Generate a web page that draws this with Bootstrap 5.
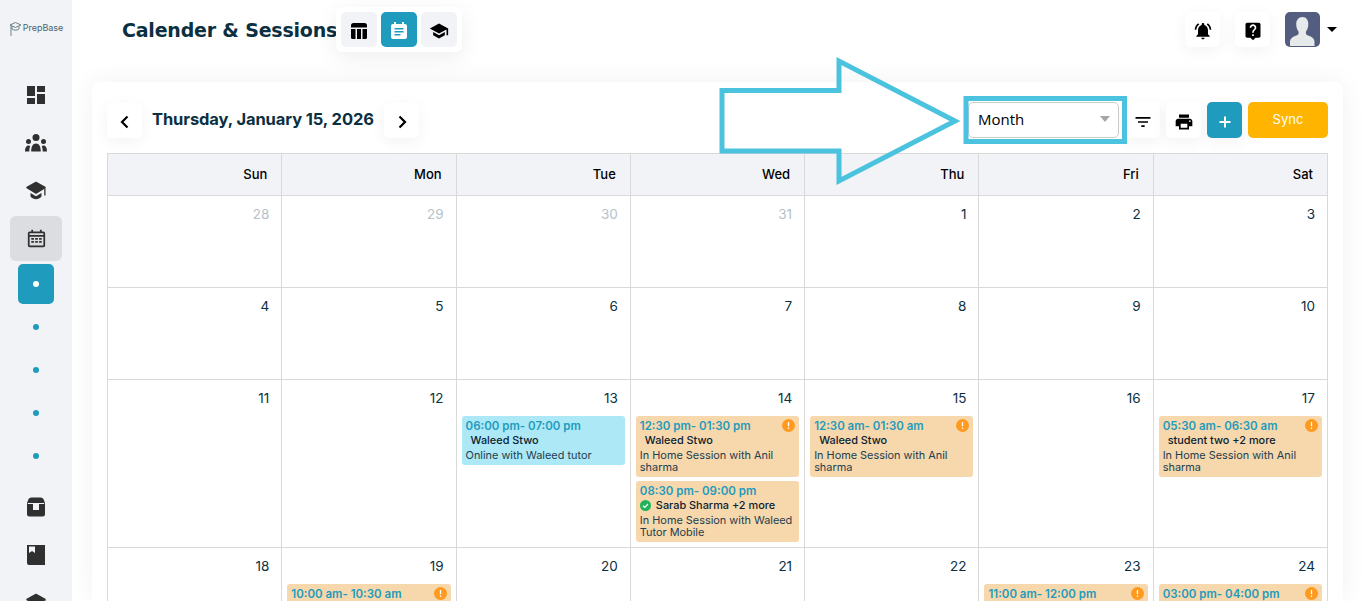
<!DOCTYPE html>
<html lang="en">
<head>
  <meta charset="UTF-8">
  <title>Calender &amp; Sessions</title>
  <link href="https://cdn.jsdelivr.net/npm/bootstrap@5.3.3/dist/css/bootstrap.min.css" rel="stylesheet">
  <style>
    html, body { height: 100%; overflow: hidden; }
    body { font-family: "Inter", "Liberation Sans", sans-serif; color: #0b3041; background: #fff; position: relative; }

    .side-rail { width: 72px; height: 601px; flex: none; background: #f1f3f6; overflow: hidden; }
    .side-rail > * { flex: none; }
    .rail-logo { height: 71px; padding-top: 21px; gap: 1px; color: #4a6472; font-size: 9px; }
    .rail-item { height: 48px; color: #303030; }
    .rail-item svg { width: 24px; height: 24px; fill: currentColor; }
    .rail-open { width: 52px; height: 45px; margin: 1px 0 3px; background: #dcdde0; border-radius: 6px; }
    .rail-sub { width: 36px; height: 43px; color: #1e9bbd; font-size: 0; }
    .rail-sub i { width: 6px; height: 6px; background: currentColor; border-radius: 50%; display: block; }
    .rail-sub.now { height: 40px; margin-bottom: 1px; background: #1e9bbd; color: #fff; border-radius: 5px; }
    .rail-gap { margin-top: 6px; }

    .page-main { min-width: 0; height: 601px; overflow: hidden; }
    .top-bar { height: 82px; padding: 12px 25px 0 50px; }
    .page-title { font-family: "DejaVu Sans", sans-serif; font-weight: 700; font-size: 19px; letter-spacing: -.2px; line-height: 36px; color: #0b3041; margin: 0 20px 0 0; width: 194px; white-space: nowrap; }
    .tab-tray { padding: 5px; margin-top: -5px; gap: 4px; background: #fff; border-radius: 6px; box-shadow: 0 6px 22px rgba(0, 0, 0, .07); }
    .sq-btn { width: 35px; height: 35px; padding: 0; border: 0; border-radius: 5px; background: #fff; color: #000; flex: none; box-shadow: 0 4px 16px rgba(0, 0, 0, .05); }
    .sq-btn svg { width: 20px; height: 20px; fill: currentColor; }
    .tab-tray .sq-btn { width: 36px; background: #f1f3f6; box-shadow: none; }
    .tab-tray .sq-btn.on, .sq-btn.on { background: #1e9bbd; color: #fff; }
    .top-right { gap: 15px; }
    .user-pic { width: 35px; height: 35px; border-radius: 5px; background: #535d80; overflow: hidden; }
    .user-caret { width: 0; height: 0; margin-left: 7px; border-left: 5.5px solid transparent; border-right: 5.5px solid transparent; border-top: 5.5px solid #000; }

    .cal-panel { margin: 0 19px 0 20px; padding: 20px 15px 0; height: 519px; overflow: hidden; background: #fff; border-radius: 8px 8px 0 0; box-shadow: 0 0 26px rgba(0, 0, 0, .06); }
    .cal-head { height: 51px; }
    .cal-nav { margin-top: 1px; }
    .cal-date { font-size: 16.5px; font-weight: 700; line-height: 35px; margin: 0 10px; width: 222px; white-space: nowrap; color: #0b3041; letter-spacing: -.1px; }
    .view-pick { width: 151px; height: 36px; padding: 0 8px 2px 9px; font-family: "Open Sans", sans-serif; font-size: 15px; font-weight: 500; color: #000; background: #fff; border: 1px solid #ccc; border-radius: 5px; }
    .view-pick i { width: 0; height: 0; border-left: 5.5px solid transparent; border-right: 5.5px solid transparent; border-top: 6px solid #a6a6a6; }
    .act-row { gap: 6px; }
    .act-row .sq-btn { height: 36px; }
    .act-row .view-pick { margin-right: -1px; transform: translateX(-1px); }
    .sync-btn { width: 80px; height: 36px; padding: 0; font-size: 13px; color: #fff; background: #ffb400; border: 0; border-radius: 5px; }

    .cal-grid { width: 1221px; table-layout: fixed; border-collapse: collapse; margin: 0; }
    .cal-grid th, .cal-grid td { border: 1px solid #d9d9d9; text-align: right; vertical-align: top; padding: 0; }
    .cal-grid th { height: 42px; vertical-align: middle; padding-right: 14px; background: #f1f3f6; font-size: 13px; font-weight: 500; color: #000; }
    .cal-grid td { padding: 9px 5px 0; }
    .wk-92 { height: 92px; }
    .wk-168 { height: 168px; }
    .day-no { display: block; padding-right: 7px; height: 27px; font-size: 13.500px; line-height: 18px; color: #0b3041; }
    .day-off { color: #b7c2c9; }

    .sess { position: relative; margin-bottom: 4px; padding: 3px 4px 4px; text-align: left; border-radius: 3px; background: #f7d7ac; font-size: 10.9px; line-height: 12px; color: #22404f; }
    .sess.live { background: #ade8f7; }
    .sess-time { font-size: 11.5px; font-weight: 600; line-height: 15px; color: #1e9bbd; white-space: nowrap; }
    .sess-who { padding-left: 5px; margin: -1px 0 2px; font-weight: 500; line-height: 14px; color: #0b2230; white-space: nowrap; }
    .sess-who svg { width: 11px; height: 11px; margin: -2px 5px 0 -5px; }
    .sess-warn { position: absolute; top: 3px; right: 4px; width: 13px; height: 13px; }

    .mark-arrow { position: absolute; left: 0; top: 0; pointer-events: none; }
  </style>
</head>
<body>

<div class="d-flex">
  <aside class="side-rail d-flex flex-column align-items-center">
    <div class="rail-logo d-flex align-items-start justify-content-center">
      <svg width="13" height="15" viewBox="0 0 13 15" fill="none" stroke="#4a6472" stroke-width=".8"><path d="M1 4 6.5 1.5 12 4 6.5 6.5zM3 5.5V8c1 1.5 6 1.5 7 0V5.5M2 5v8M1 14h2"/></svg>
      <span>PrepBase</span>
    </div>
    <div class="rail-item d-flex align-items-center justify-content-center"><svg viewBox="0 0 24 24"><path d="M3 13h8V3H3v10zm0 8h8v-6H3v6zm10 0h8V11h-8v10zm0-18v6h8V3h-8z"/></svg></div>
    <div class="rail-item d-flex align-items-center justify-content-center"><svg viewBox="0 0 24 24"><circle cx="12" cy="6.500" r="3.500"/><circle cx="4.500" cy="10.500" r="2.500"/><circle cx="19.500" cy="10.500" r="2.500"/><path d="M7.200 20.500c0-5 1.500-8 4.800-8s4.800 3 4.800 8zM1 20.500c0-3.500 1.200-6 3.500-6 .6 0 1.200.2 1.700.5-.6 1.500-.9 3.300-.9 5.500zM23 20.500c0-3.500-1.200-6-3.500-6-.6 0-1.200.2-1.700.5.6 1.500.9 3.300.9 5.500z"/></svg></div>
    <div class="rail-item d-flex align-items-center justify-content-center"><svg viewBox="0 0 24 24"><path d="M12 3.500 21 8.500 12 14 3 8.500z" stroke="currentColor" stroke-width="1.500" stroke-linejoin="round"/><path d="M6.500 14 12 17.300l5.500-3.300v3.500c-3 3.500-8 3.500-11 0zM20.200 10v6.500h1.300V9z"/></svg></div>
    <div class="rail-open d-flex align-items-center justify-content-center">
      <svg width="19" height="19" viewBox="0 0 22 22" fill="#303030"><path d="M5 1h2v2h8V1h2v2h2a2 2 0 0 1 2 2v14a2 2 0 0 1-2 2H3a2 2 0 0 1-2-2V5a2 2 0 0 1 2-2h2zM3 5v2h16V5zm0 4v10h16V9z" fill-rule="evenodd"/><path d="M5 10.500h3v2H5zm4.500 0h3v2h-3zm4.500 0h3v2h-3zM5 14h3v2H5zm4.500 0h3v2h-3zm4.500 0h3v2h-3z"/></svg>
    </div>
    <div class="rail-sub now d-flex align-items-center justify-content-center"><i></i></div>
    <div class="rail-sub d-flex align-items-center justify-content-center"><i></i></div>
    <div class="rail-sub d-flex align-items-center justify-content-center"><i></i></div>
    <div class="rail-sub d-flex align-items-center justify-content-center"><i></i></div>
    <div class="rail-sub d-flex align-items-center justify-content-center"><i></i></div>
    <div class="rail-item rail-gap d-flex align-items-center justify-content-center"><svg viewBox="0 0 24 24"><path fill-rule="evenodd" d="M7.500 2.500h9c1.500 0 2.500.8 3.200 2L21 8v11a2.500 2.500 0 0 1-2.500 2.500h-13A2.500 2.500 0 0 1 3 19V8l1.300-3.500c.7-1.200 1.700-2 3.200-2zM3.800 8v1h5.200v6h6V9h5.200V8H15.200V8H8.800z"/></svg></div>
    <div class="rail-item d-flex align-items-center justify-content-center"><svg viewBox="0 0 24 24"><path fill-rule="evenodd" d="M3 2h18v20H5a2 2 0 0 1-2-2zM5 3.500v6.500l3-2 3 2V3.500z"/></svg></div>
    <div class="rail-item d-flex align-items-center justify-content-center"><svg viewBox="0 0 24 24"><path d="M12 3.500 21 8.500 12 14 3 8.500z" stroke="currentColor" stroke-width="1.500" stroke-linejoin="round"/><path d="M6.500 14 12 17.300l5.500-3.300v3.500c-3 3.500-8 3.500-11 0zM20.200 10v6.500h1.300V9z"/></svg></div>
  </aside>

  <main class="page-main flex-grow-1">
    <header class="top-bar d-flex align-items-start">
      <h1 class="page-title">Calender &amp; Sessions</h1>
      <div class="tab-tray d-flex">
        <button class="sq-btn" type="button"><svg viewBox="0 0 20 20"><path d="M2 4.500A2.500 2.500 0 0 1 4.500 2h11A2.500 2.500 0 0 1 18 4.500V6.500H2zM2 8h4.500v10h-3A1.500 1.500 0 0 1 2 16.500zm6 0h4v10H8zm5.500 0H18v8.500a1.500 1.500 0 0 1-1.500 1.500h-3z"/></svg></button>
        <button class="sq-btn on" type="button"><svg viewBox="0 0 20 20"><path fill-rule="evenodd" d="M5 1h2v2h6V1h2v2h1a2 2 0 0 1 2 2v11a2 2 0 0 1-2 2H4a2 2 0 0 1-2-2V5a2 2 0 0 1 2-2h1zM5.500 7v1.500h9V7zm0 3v1.500h9V10zm0 3v1.500h6V13z"/></svg></button>
        <button class="sq-btn" type="button"><svg viewBox="0 0 24 24"><path d="M5 13.180v4L12 21l7-3.820v-4L12 17l-7-3.820zM12 3 1 9l11 6 9-4.910V17h2V9L12 3z"/></svg></button>
      </div>
      <div class="top-right d-flex align-items-center ms-auto">
        <button class="sq-btn" type="button"><svg viewBox="0 0 24 24"><path d="M7.58 4.080 6.150 2.650C3.750 4.480 2.170 7.300 2.030 10.500h2c.15-2.650 1.510-4.970 3.550-6.420zm12.390 6.420h2c-.15-3.200-1.730-6.020-4.120-7.850l-1.420 1.430c2.020 1.450 3.390 3.770 3.540 6.420zM18 11c0-3.070-1.640-5.640-4.500-6.320V4c0-.83-.67-1.500-1.500-1.500s-1.500.67-1.500 1.500v.68C7.630 5.360 6 7.920 6 11v5l-2 2v1h16v-1l-2-2v-5zm-6 11c.14 0 .27-.01.4-.04.65-.14 1.180-.58 1.440-1.180.1-.24.15-.5.15-.78h-4c.01 1.100.9 2 2.010 2z"/></svg></button>
        <button class="sq-btn" type="button"><svg viewBox="0 0 24 24"><path d="M19 2H5c-1.110 0-2 .9-2 2v14c0 1.100.89 2 2 2h4l3 3 3-3h4c1.100 0 2-.9 2-2V4c0-1.100-.9-2-2-2zm-6 16h-2v-2h2v2zm2.070-7.750-.9.92C13.450 11.900 13 12.500 13 14h-2v-.5c0-1.100.45-2.100 1.170-2.830l1.240-1.260c.37-.36.59-.86.59-1.410 0-1.100-.9-2-2-2s-2 .9-2 2H8c0-2.210 1.790-4 4-4s4 1.790 4 4c0 .88-.36 1.680-.93 2.250z"/></svg></button>
        <div class="d-flex align-items-center">
          <div class="user-pic"><svg width="35" height="35" viewBox="0 0 35 35" fill="#e6eaea"><path d="M17.500 5c3.600 0 5.800 2.800 5.800 7 0 3-.9 5.500-2.300 7.500-.5 1.700 0 3.200 1.500 3.800 3.500 1.300 6.500 2.500 7 6.200V34H5v-4.500c.5-3.700 3.500-4.900 7-6.200 1.500-.6 2-2.100 1.500-3.800-1.400-2-2.300-4.500-2.300-7.500 0-4.200 2.700-7 6.300-7z"/></svg></div>
          <span class="user-caret"></span>
        </div>
      </div>
    </header>

    <section class="cal-panel">
      <div class="cal-head d-flex align-items-start">
        <button class="sq-btn cal-nav" type="button"><svg viewBox="0 0 20 20"><path d="M12.500 4.500 7 10l5.500 5.500" fill="none" stroke="currentColor" stroke-width="2.200"/></svg></button>
        <h2 class="cal-date mb-0">Thursday, January 15, 2026</h2>
        <button class="sq-btn cal-nav" type="button"><svg viewBox="0 0 20 20"><path d="M7.500 4.500 13 10l-5.500 5.500" fill="none" stroke="currentColor" stroke-width="2.200"/></svg></button>
        <div class="act-row d-flex ms-auto">
          <div class="view-pick d-flex align-items-center justify-content-between">Month<i></i></div>
          <button class="sq-btn" type="button"><svg viewBox="0 0 24 24"><path d="M10 18h4v-2h-4v2zM3 6v2h18V6H3zm3 7h12v-2H6v2z"/></svg></button>
          <button class="sq-btn" type="button"><svg viewBox="0 0 24 24"><path d="M19 8H5c-1.660 0-3 1.340-3 3v6h4v4h12v-4h4v-6c0-1.660-1.340-3-3-3zm-3 11H8v-5h8v5zm3-7c-.55 0-1-.45-1-1s.45-1 1-1 1 .45 1 1-.45 1-1 1zm-1-9H6v4h12V3z"/></svg></button>
          <button class="sq-btn on" type="button"><svg viewBox="0 0 20 20"><path d="M10 4.500v11M4.500 10h11" stroke="currentColor" stroke-width="2"/></svg></button>
          <button class="sync-btn" type="button">Sync</button>
        </div>
      </div>

      <table class="cal-grid">
        <thead>
          <tr><th>Sun</th><th>Mon</th><th>Tue</th><th>Wed</th><th>Thu</th><th>Fri</th><th>Sat</th></tr>
        </thead>
        <tbody>
          <tr class="wk-92">
            <td><span class="day-no day-off">28</span></td><td><span class="day-no day-off">29</span></td><td><span class="day-no day-off">30</span></td><td><span class="day-no day-off">31</span></td><td><span class="day-no">1</span></td><td><span class="day-no">2</span></td><td><span class="day-no">3</span></td>
          </tr>
          <tr class="wk-92">
            <td><span class="day-no">4</span></td><td><span class="day-no">5</span></td><td><span class="day-no">6</span></td><td><span class="day-no">7</span></td><td><span class="day-no">8</span></td><td><span class="day-no">9</span></td><td><span class="day-no">10</span></td>
          </tr>
          <tr class="wk-168">
            <td><span class="day-no">11</span></td>
            <td><span class="day-no">12</span></td>
            <td><span class="day-no">13</span>
              <div class="sess live">
                <div class="sess-time">06:00 pm- 07:00 pm</div>
                <div class="sess-who">Waleed Stwo</div>
                <div>Online with Waleed tutor</div>
              </div>
            </td>
            <td><span class="day-no">14</span>
              <div class="sess">
                <svg class="sess-warn" viewBox="0 0 13 13"><circle cx="6.500" cy="6.500" r="6.500" fill="#ff9a1f"/><path d="M6.500 3v4.200M6.500 8.600v1.300" stroke="#fff" stroke-width="1.300"/></svg>
                <div class="sess-time">12:30 pm- 01:30 pm</div>
                <div class="sess-who">Waleed Stwo</div>
                <div>In Home Session with Anil sharma</div>
              </div>
              <div class="sess">
                <div class="sess-time">08:30 pm- 09:00 pm</div>
                <div class="sess-who"><svg viewBox="0 0 11 11"><circle cx="5.500" cy="5.500" r="5.500" fill="#1fb25a"/><path d="M3 5.700 4.800 7.400 8 4" fill="none" stroke="#fff" stroke-width="1.200"/></svg>Sarab Sharma +2 more</div>
                <div>In Home Session with Waleed Tutor Mobile</div>
              </div>
            </td>
            <td><span class="day-no">15</span>
              <div class="sess">
                <svg class="sess-warn" viewBox="0 0 13 13"><circle cx="6.500" cy="6.500" r="6.500" fill="#ff9a1f"/><path d="M6.500 3v4.200M6.500 8.600v1.300" stroke="#fff" stroke-width="1.300"/></svg>
                <div class="sess-time">12:30 am- 01:30 am</div>
                <div class="sess-who">Waleed Stwo</div>
                <div>In Home Session with Anil sharma</div>
              </div>
            </td>
            <td><span class="day-no">16</span></td>
            <td><span class="day-no">17</span>
              <div class="sess">
                <svg class="sess-warn" viewBox="0 0 13 13"><circle cx="6.500" cy="6.500" r="6.500" fill="#ff9a1f"/><path d="M6.500 3v4.200M6.500 8.600v1.300" stroke="#fff" stroke-width="1.300"/></svg>
                <div class="sess-time">05:30 am- 06:30 am</div>
                <div class="sess-who">student two +2 more</div>
                <div>In Home Session with Anil sharma</div>
              </div>
            </td>
          </tr>
          <tr class="wk-92">
            <td><span class="day-no">18</span></td>
            <td><span class="day-no">19</span>
              <div class="sess">
                <svg class="sess-warn" viewBox="0 0 13 13"><circle cx="6.500" cy="6.500" r="6.500" fill="#ff9a1f"/><path d="M6.500 3v4.200M6.500 8.600v1.300" stroke="#fff" stroke-width="1.300"/></svg>
                <div class="sess-time">10:00 am- 10:30 am</div>
              </div>
            </td>
            <td><span class="day-no">20</span></td>
            <td><span class="day-no">21</span></td>
            <td><span class="day-no">22</span></td>
            <td><span class="day-no">23</span>
              <div class="sess">
                <svg class="sess-warn" viewBox="0 0 13 13"><circle cx="6.500" cy="6.500" r="6.500" fill="#ff9a1f"/><path d="M6.500 3v4.200M6.500 8.600v1.300" stroke="#fff" stroke-width="1.300"/></svg>
                <div class="sess-time">11:00 am- 12:00 pm</div>
              </div>
            </td>
            <td><span class="day-no">24</span>
              <div class="sess">
                <svg class="sess-warn" viewBox="0 0 13 13"><circle cx="6.500" cy="6.500" r="6.500" fill="#ff9a1f"/><path d="M6.500 3v4.200M6.500 8.600v1.300" stroke="#fff" stroke-width="1.300"/></svg>
                <div class="sess-time">03:00 pm- 04:00 pm</div>
              </div>
            </td>
          </tr>
        </tbody>
      </table>
    </section>
  </main>
</div>

<!-- callout drawn over the page -->
<svg class="mark-arrow" width="1362" height="601" fill="none" stroke="#4cc3de" stroke-width="5">
  <path d="M722 90.500H839V61L955 121 839 181V151H722z"/>
  <rect x="966" y="98.500" width="158.500" height="43"/>
</svg>

<script src="https://cdn.jsdelivr.net/npm/bootstrap@5.3.3/dist/js/bootstrap.bundle.min.js"></script>
</body>
</html>
